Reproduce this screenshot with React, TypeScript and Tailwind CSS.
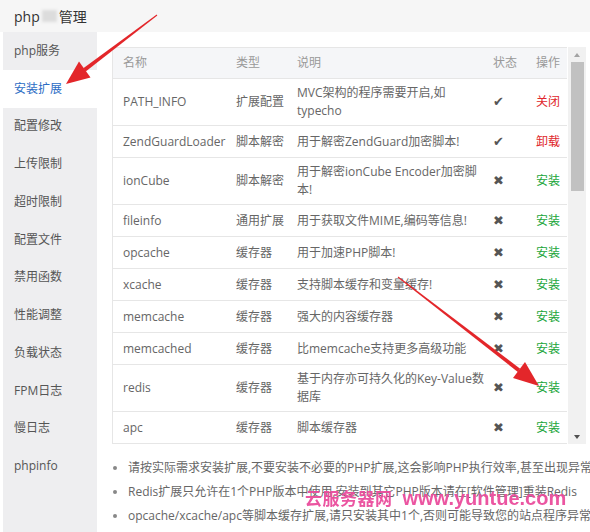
import React from "react";

const sideItems = [
  "php服务",
  "安装扩展",
  "配置修改",
  "上传限制",
  "超时限制",
  "配置文件",
  "禁用函数",
  "性能调整",
  "负载状态",
  "FPM日志",
  "慢日志",
  "phpinfo",
];

type Row = {
  name: string;
  type: string;
  desc: React.ReactNode;
  on: boolean;
  act: string;
  red?: boolean;
  tall?: boolean;
};

const rows: Row[] = [
  { name: "PATH_INFO", type: "扩展配置", desc: <>MVC架构的程序需要开启,如<br />typecho</>, on: true, act: "关闭", red: true, tall: true },
  { name: "ZendGuardLoader", type: "脚本解密", desc: "用于解密ZendGuard加密脚本!", on: true, act: "卸载", red: true },
  { name: "ionCube", type: "脚本解密", desc: <>用于解密ionCube Encoder加密脚<br />本!</>, on: false, act: "安装", tall: true },
  { name: "fileinfo", type: "通用扩展", desc: "用于获取文件MIME,编码等信息!", on: false, act: "安装" },
  { name: "opcache", type: "缓存器", desc: "用于加速PHP脚本!", on: false, act: "安装" },
  { name: "xcache", type: "缓存器", desc: "支持脚本缓存和变量缓存!", on: false, act: "安装" },
  { name: "memcache", type: "缓存器", desc: "强大的内容缓存器", on: false, act: "安装" },
  { name: "memcached", type: "缓存器", desc: "比memcache支持更多高级功能", on: false, act: "安装" },
  { name: "redis", type: "缓存器", desc: <>基于内存亦可持久化的Key-Value数<br />据库</>, on: false, act: "安装", tall: true },
  { name: "apc", type: "缓存器", desc: "脚本缓存器", on: false, act: "安装" },
];

const notes = [
  "请按实际需求安装扩展,不要安装不必要的PHP扩展,这会影响PHP执行效率,甚至出现异常",
  "Redis扩展只允许在1个PHP版本中使用,安装到其它PHP版本请在[软件管理]重装Redis",
  "opcache/xcache/apc等脚本缓存扩展,请只安装其中1个,否则可能导致您的站点程序异常",
];

export default function App() {
  return (
    <div
      className="relative w-[590px] h-[532px] overflow-hidden bg-white text-[#666]"
      style={{ fontFamily: "'Open Sans','Noto Sans CJK SC',sans-serif" }}
    >
      {/* header */}
      <div className="h-[32px] bg-[#f6f6f6] flex items-center pl-[14px] text-[14px] text-[#333]">
        <span>php</span>
        <span className="inline-block w-[15px] h-[12px] mx-[2px] bg-[#dcdcdc] blur-[1.5px]" />
        <span>管理</span>
      </div>

      <div className="flex">
        {/* sidebar */}
        <div className="w-[94px] ml-[3px] h-[500px] bg-[#eeeef0] text-[12px] text-[#555]">
          {sideItems.map((s, i) => (
            <div
              key={s}
              className={
                i === 1
                  ? "h-[37.75px] flex items-center pl-[11px] bg-white text-[#2c6cc4]"
                  : "h-[37.75px] flex items-center pl-[11px]"
              }
            >
              {s}
            </div>
          ))}
        </div>

        {/* main */}
        <div className="flex-1 min-w-0 pl-[15px] pt-[15px] overflow-hidden">
          <div className="flex h-[397px] w-[474px] overflow-hidden">
            <div className="w-[456px] border-l border-[#e6e6e6] text-[12px]">
              <div className="h-[32px] flex items-center bg-[#f5f6f8] border-t border-b border-[#e6e6e6] text-[#999]">
                <div className="w-[113px] pl-[10px]">名称</div>
                <div className="w-[61px] pl-[10px]">类型</div>
                <div className="w-[196px] pl-[10px]">说明</div>
                <div className="w-[46px] pl-[10px]">状态</div>
                <div className="flex-1 text-right pr-[7px]">操作</div>
              </div>
              {rows.map((r) => (
                <div
                  key={r.name}
                  className={
                    (r.tall ? "h-[47px]" : "h-[32px]") +
                    " flex items-center border-b border-[#e6e6e6] leading-[18px]"
                  }
                >
                  <div className="w-[113px] pl-[10px] whitespace-nowrap">{r.name}</div>
                  <div className="w-[61px] pl-[10px] whitespace-nowrap">{r.type}</div>
                  <div className="w-[196px] pl-[10px] whitespace-nowrap">{r.desc}</div>
                  <div
                    className="w-[46px] pl-[10px] text-[#555] text-[13px]"
                    style={{ fontFamily: "'DejaVu Sans',sans-serif" }}
                  >
                    {r.on ? "✔" : "✖"}
                  </div>
                  <div
                    className={
                      "flex-1 text-right pr-[7px] " +
                      (r.red ? "text-[#e0262b]" : "text-[#20a53a]")
                    }
                  >
                    {r.act}
                  </div>
                </div>
              ))}
            </div>
            {/* scrollbar */}
            <div className="w-[18px] ml-[1px] h-full bg-[#f1f1f1] flex flex-col items-center">
              <div className="h-[15px] w-full flex items-center justify-center">
                <div className="w-0 h-0 border-l-[3.5px] border-r-[3.5px] border-b-[4px] border-l-transparent border-r-transparent border-b-[#a3a3a3]" />
              </div>
              <div className="w-[13px] h-[129px] bg-[#c1c1c1]" />
              <div className="flex-1" />
              <div className="h-[15px] w-full flex items-center justify-center">
                <div className="w-0 h-0 border-l-[3.5px] border-r-[3.5px] border-t-[4px] border-l-transparent border-r-transparent border-t-[#505050]" />
              </div>
            </div>
          </div>

          <ul className="mt-[12px] text-[12px] text-[#666]">
            {notes.map((n) => (
              <li key={n} className="h-[24px] flex items-center whitespace-nowrap">
                <span className="w-[4px] h-[4px] rounded-full bg-[#888] ml-[1px] mr-[11px] shrink-0" />
                <span>{n}</span>
              </li>
            ))}
          </ul>
        </div>
      </div>

      {/* watermark */}
      <div
        className="absolute left-[305px] top-[483px] flex items-baseline font-bold text-[#ea4c9c] opacity-95 whitespace-nowrap"
        style={{ fontFamily: "'Liberation Sans','Noto Sans CJK SC',sans-serif" }}
      >
        <span className="text-[17px] tracking-[0.5px]">云服务器网</span>
        <span className="text-[20px] ml-[10px]">www.yuntue.com</span>
      </div>

      {/* arrows */}
      <svg className="absolute left-0 top-0 pointer-events-none" width="590" height="532">
        <polygon points="157.3,15.4 156.7,14.6 83.3,68.2 85.7,71.4" fill="#e3262a" />
        <polygon points="66,84 90.5,77.5 79,61.5" fill="#e3262a" />
        <polygon points="397.7,277.4 398.3,276.6 520.2,368.7 517.8,371.9" fill="#e3262a" />
        <polygon points="539,386 513,378 525,362" fill="#e3262a" />
      </svg>
    </div>
  );
}
